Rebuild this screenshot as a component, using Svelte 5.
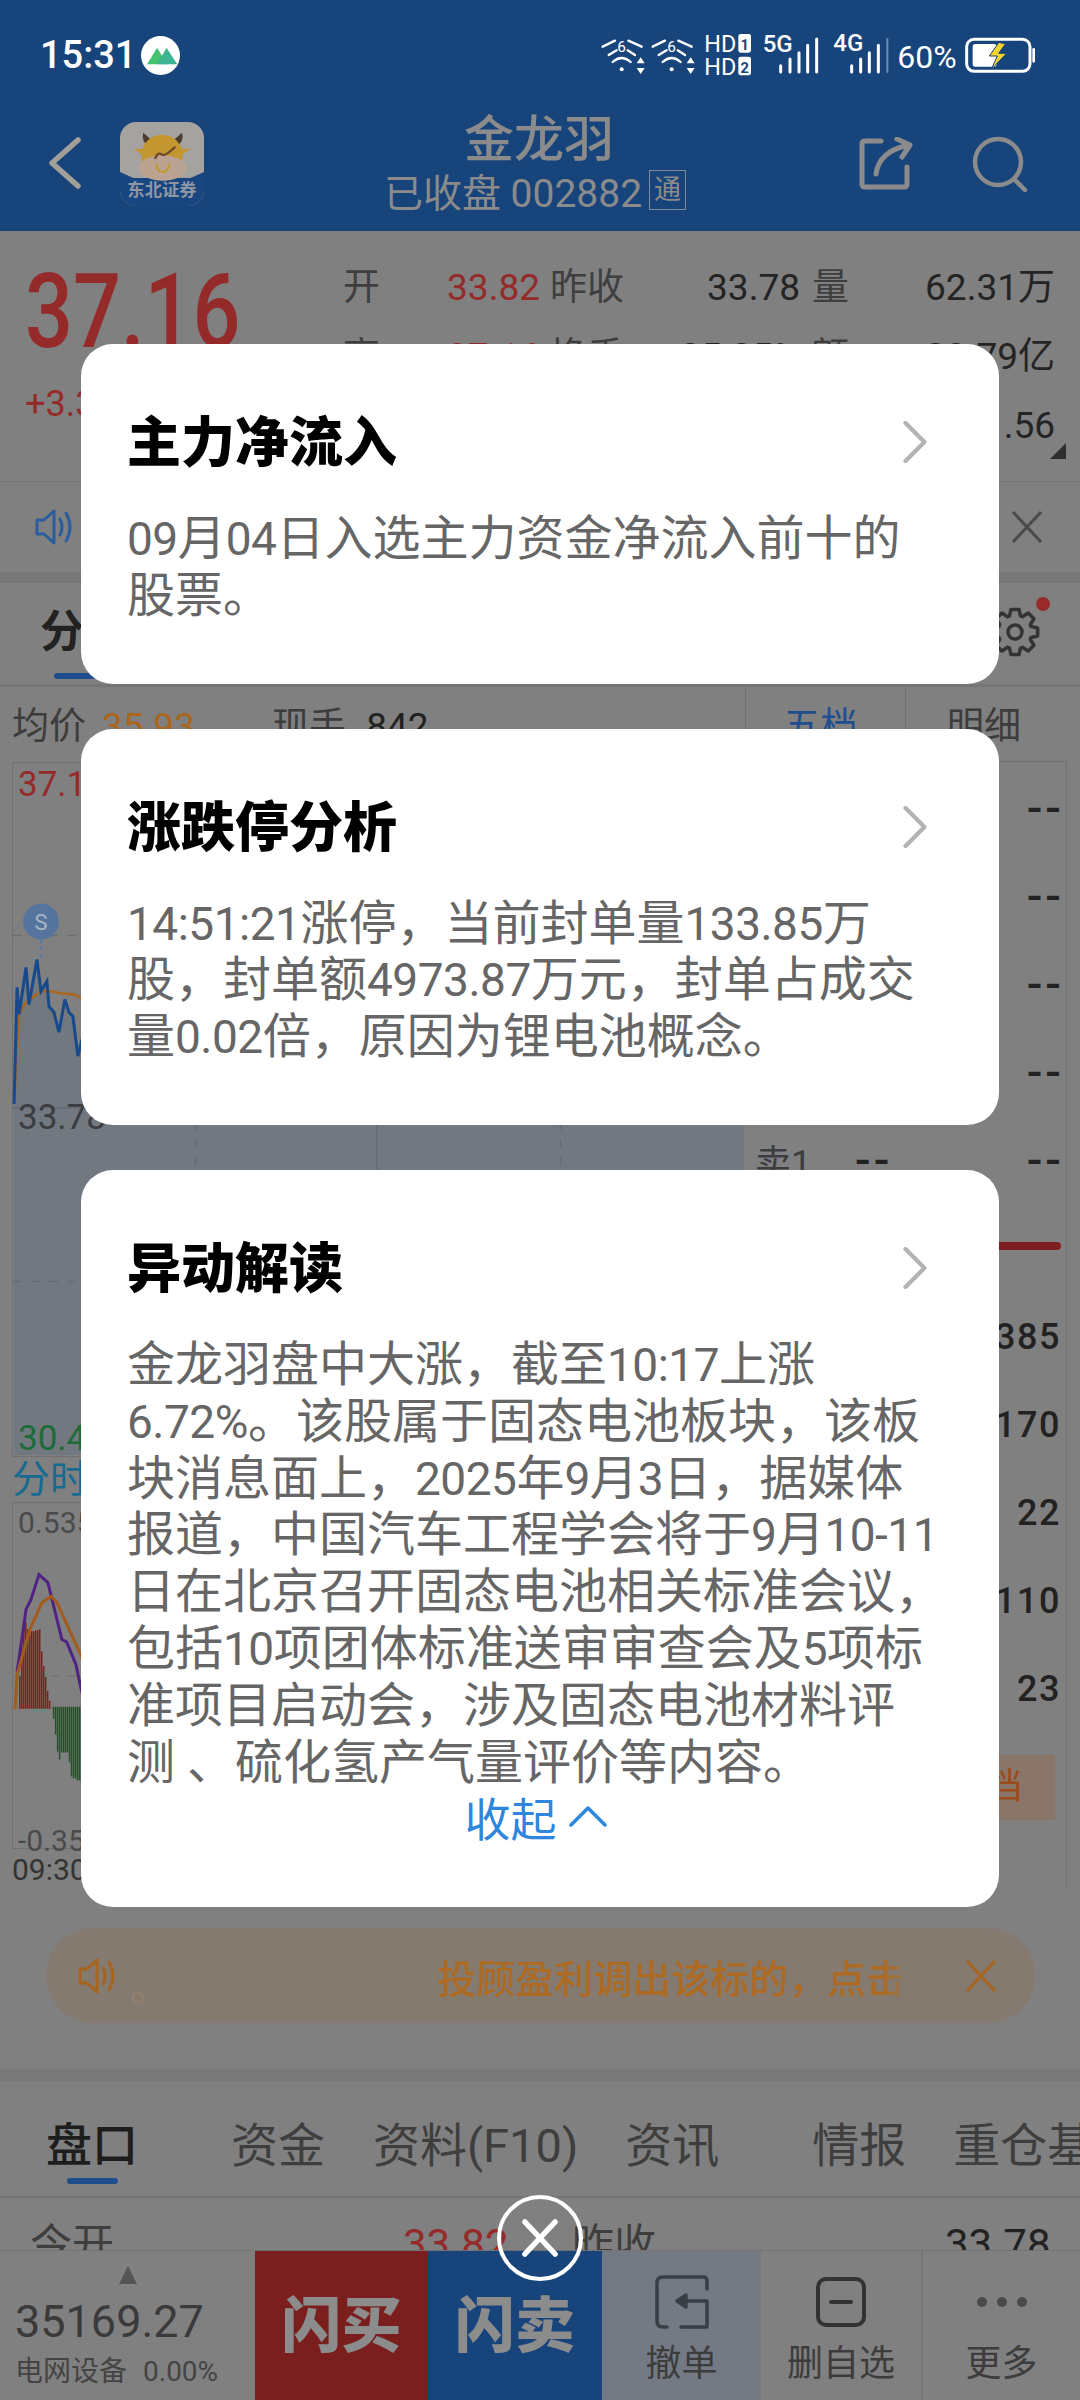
<script>
  const quoteRows = [
    ['开', '33.82', '昨收', '33.78', '量', '62.31万'],
    ['高', '37.16', '换手', '25.25%', '额', '23.79亿'],
    ['低', '33.56', '振幅', '10.54%', '市盈', '41.56']
  ];
  const sellRows = ['卖5', '卖4', '卖3', '卖2', '卖1'];
  const buyRows = [
    ['买1', '37.16', '385'],
    ['买2', '37.15', '170'],
    ['买3', '37.14', '22'],
    ['买4', '37.13', '110'],
    ['买5', '37.12', '23']
  ];
  const infoTabs = [
    { label: '盘口', gap: 46, active: true },
    { label: '资金', gap: 93 },
    { label: '资料(F10)', gap: 48 },
    { label: '资讯', gap: 47 },
    { label: '情报', gap: 93 },
    { label: '重仓基', gap: 47 }
  ];
  const C = '\uFF0C'; // full-width comma
  const cards = [
    {
      title: '主力净流入',
      lines: ['09月04日入选主力资金净流入前十的', '股票。']
    },
    {
      title: '涨跌停分析',
      lines: [
        `14:51:21涨停${C}当前封单量133.85万`,
        `股${C}封单额4973.87万元${C}封单占成交`,
        `量0.02倍${C}原因为锂电池概念。`
      ]
    },
    {
      title: '异动解读',
      lines: [
        `金龙羽盘中大涨${C}截至10:17上涨`,
        `6.72%。该股属于固态电池板块${C}该板`,
        `块消息面上${C}2025年9月3日${C}据媒体`,
        `报道${C}中国汽车工程学会将于9月10-11`,
        `日在北京召开固态电池相关标准会议${C}`,
        '包括10项团体标准送审审查会及5项标',
        `准项目启动会${C}涉及固态电池材料评`,
        '测 、硫化氢产气量评价等内容。'
      ],
      collapsible: true
    }
  ];
  const adviceText = `投顾盈利调出该标的${C}点击查看`;

  // digits run narrower than the CJK text, so they get their own span
  const splitNumbers = (line) => line.split(/([0-9:.%-]+)/);

  // price and average lines, in page pixels (the svg viewBox starts at the chart corner)
  const priceLine = '13,1105 16,988 18,1015 25,968 28,1005 36,960 40,992 46,982 48,1007 53,1013 58,1033 64,1000 68,1013 72,1017 77,1057 82,1037 200,1000 400,1020 745,900';
  const avgLine = '13,1105 18,1015 25,1003 40,992 50,992 60,994 72,995 82,999 400,1000 745,960';
  const macdLine = '15,1673 24,1610 29,1600 37,1575 46,1583 60,1640 65,1643 74,1665 80,1693 85,1700';
  const signalLine = '13,1710 15,1675 28,1630 40,1603 49,1597 55,1603 80,1658 85,1670';

  const redBars = [33, 63, 87, 87, 80, 78, 78, 78, 79, 79, 80, 58, 43, 32, 18, 8];
  const greenBars = [12, 28, 45, 53, 46, 46, 46, 46, 56, 70, 72, 72, 74, 74, 76];

  // gear outline for the chart settings button
  function gearPath(cx, cy, outer, inner, teeth) {
    const pts = [];
    const step = (Math.PI * 2) / teeth;
    for (let i = 0; i < teeth; i++) {
      const a = i * step;
      [[-0.3, inner], [-0.16, outer], [0.16, outer], [0.3, inner]].forEach(([off, r]) => {
        const t = a + off * step * 1.4;
        pts.push(`${(cx + Math.cos(t) * r).toFixed(1)},${(cy + Math.sin(t) * r).toFixed(1)}`);
      });
    }
    return `M${pts.join('L')}Z`;
  }
</script>

{#snippet speaker(color)}
  <svg class="speaker" viewBox="0 0 44 36" fill="none" stroke={color} stroke-width="3" stroke-linejoin="round" stroke-linecap="round">
    <path d="M2 11H9L19 2V34L9 25H2Z" />
    <path d="M25 10Q29 18 25 26" />
    <path d="M31 4Q39 18 31 32" />
  </svg>
{/snippet}

{#snippet cross(color)}
  <svg class="cross" viewBox="0 0 32 32" fill="none" stroke={color} stroke-width="3">
    <path d="M2 1L30 31M30 1L2 31" />
  </svg>
{/snippet}

<div class="page">
  <div class="statusbar">
    <div class="clock">
      <span>15:31</span>
      <svg class="app-dot" viewBox="360 47 116 116">
        <circle cx="418" cy="105" r="58" fill="#fff" />
        <path d="M378 131L408 82L438 131Z" fill="#47c270" />
        <path d="M408 131L436 82L468 131Z" fill="#3db594" />
      </svg>
    </div>
    <svg class="indicators" viewBox="0 0 1380 210" fill="none" stroke="#fff" stroke-linecap="round">
      {#each [0, 150] as dx}
        <g transform="translate({dx} 0)">
          <path d="M38 80L75 62M56 105L80 91M115 62L155 80M113 91L135 105" stroke-width="7" />
          <path d="M68 126Q95 102 122 126" stroke-width="7" />
          <circle cx="95" cy="148" r="6" fill="#fff" stroke="none" />
          <path d="M152 112L164 130H140ZM152 162L140 144H164Z" fill="#fff" stroke="none" />
          <text x="95" y="97" font-size="46" fill="#fff" stroke="none" text-anchor="middle" class="svg-text">6</text>
        </g>
      {/each}
      <g fill="#fff" stroke="none" class="svg-text">
        <text x="343" y="97" font-size="70">HD</text>
        <text x="343" y="165" font-size="70">HD</text>
        <rect x="445" y="42" width="38" height="56" rx="7" />
        <rect x="445" y="110" width="38" height="56" rx="7" />
        <text x="464" y="90" font-size="44" font-weight="700" fill="#18447c" text-anchor="middle">1</text>
        <text x="464" y="158" font-size="44" font-weight="700" fill="#18447c" text-anchor="middle">2</text>
        <text x="518" y="96" font-size="72" font-weight="500">5G</text>
        <text x="730" y="92" font-size="72" font-weight="500">4G</text>
        <text x="922" y="144" font-size="96">60%</text>
      </g>
      <g stroke-width="9">
        <path d="M572 137V156M600 117V156M627 98V156M653 76V156M680 57V156" />
        <path d="M785 137V156M812 117V156M838 98V156M865 76V156" />
        <path d="M892 57V156" stroke="#6f8cb0" stroke-width="6" />
      </g>
      <rect x="1130" y="58" width="190" height="96" rx="22" stroke-width="9" />
      <path d="M1331 88V124" stroke-width="8" />
      <rect x="1148" y="72" width="72" height="68" rx="8" fill="#fff" stroke="none" />
      <path d="M1226 68L1198 108H1222L1204 148L1250 100H1226L1246 72Z" fill="#f6d42a" stroke="#18447c" stroke-width="3" stroke-linejoin="round" />
    </svg>
  </div>

  <header class="topbar">
    <div class="topbar-left">
      <svg class="back" viewBox="0 0 36 56" fill="none" stroke="#a29e98" stroke-width="5.5" stroke-linecap="round" stroke-linejoin="round">
        <path d="M31 4L5 27L31 50" />
      </svg>
      <svg class="broker" viewBox="0 0 252 252">
        <rect width="252" height="252" rx="48" fill="#a5a3a0" />
        <path d="M0 150L40 168H212L252 150V204A48 48 0 0 1 204 252H48A48 48 0 0 1 0 204Z" fill="#174680" />
        <path d="M70 32Q62 60 88 72L92 52ZM186 32Q194 60 168 72L164 52Z" fill="#4a3a30" />
        <path d="M40 80L80 82L85 110ZM212 80L172 82L167 110Z" fill="#c3962f" />
        <circle cx="126" cy="100" r="62" fill="#c3962f" />
        <ellipse cx="128" cy="138" rx="72" ry="38" fill="#bba391" />
        <path d="M108 126Q112 150 128 150Q144 150 148 126" fill="none" stroke="#c3962f" stroke-width="6" />
        <path d="M106 108Q114 88 126 98Q134 104 164 76" fill="none" stroke="#6e4a2e" stroke-width="7" stroke-linecap="round" />
        <text x="126" y="222" font-size="52" font-weight="700" fill="#8e97a3" text-anchor="middle" class="svg-text">东北证券</text>
      </svg>
    </div>
    <div class="topbar-title">
      <div class="stock-name">金龙羽</div>
      <div class="stock-sub">已收盘 002882<span class="tong">通</span></div>
    </div>
    <div class="topbar-right">
      <svg class="share" viewBox="0 0 54 54" fill="none" stroke="#8b8b8b" stroke-width="5" stroke-linecap="round" stroke-linejoin="round">
        <path d="M22 4H6Q3 4 3 7V47Q3 50 6 50H45Q48 50 48 47V30" />
        <path d="M17 37Q20 14 50 8M38 2L51 8L43 20" />
      </svg>
      <svg class="search" viewBox="0 0 56 56" fill="none" stroke="#8b8b8b" stroke-width="4.5" stroke-linecap="round">
        <circle cx="26" cy="26" r="23" />
        <path d="M42 43L53 54" />
      </svg>
    </div>
  </header>

  <section class="quote">
    <div class="quote-main">
      <div class="last-price">37.16</div>
      <div class="change">+3.38 +10.01%</div>
    </div>
    <div class="quote-grid">
      {#each quoteRows as row}
        {#each row as cell, i}
          <div class={i % 2 ? 'q-val' : 'q-label'} class:red={i === 1} class:mid={i === 2} class:end={i === 4}>{cell}</div>
        {/each}
      {/each}
    </div>
    <span class="corner"></span>
  </section>

  <div class="notice">
    {@render speaker('#2a5c9e')}
    {@render cross('#4a4a4a')}
  </div>

  <div class="band"></div>

  <div class="chart-tabs">
    <div class="chart-tab">分时<i></i></div>
    <svg class="gear" viewBox="990 596 62 66">
      <path d={gearPath(1015, 632, 23, 17, 8)} fill="none" stroke="#333" stroke-width="3.5" stroke-linejoin="round" />
      <circle cx="1015" cy="632" r="7" fill="none" stroke="#333" stroke-width="3.5" />
      <circle cx="1043" cy="604" r="7" fill="#982a2a" />
    </svg>
  </div>

  <div class="price-head">
    <div class="price-info">
      <span class="label">均价</span><span class="avg">35.93</span>
      <span class="label hand">现手</span><span class="hand-val">842</span>
    </div>
    <div class="side-tab on">五档</div>
    <div class="side-tab">明细</div>
  </div>

  <div class="body">
    <div class="charts">
      <div class="main-chart">
        <svg viewBox="12 762 733 695">
          <polygon points="13,1457 {priceLine} 745,1457" fill="#72787f" />
          <g stroke="#666c74" stroke-width="1.5" fill="none">
            <path d="M195 762V1457M561 762V1457M12 936H745M12 1283H745" stroke-dasharray="9 9" />
            <path d="M377 762V1457M12 1109H745" />
          </g>
          <polyline points={avgLine} fill="none" stroke="#a9661f" stroke-width="2.5" />
          <polyline points={priceLine} fill="none" stroke="#174a8c" stroke-width="3" />
          <path d="M40 940V962" stroke="#5a7aa3" stroke-width="2" stroke-dasharray="4 3" />
          <circle cx="40" cy="922" r="18" fill="#56759e" />
          <text x="40" y="930" font-size="22" fill="#a9b5c5" text-anchor="middle" class="svg-text">S</text>
        </svg>
        <span class="tick up">37.16</span>
        <span class="tick mid-tick">33.78</span>
        <span class="tick down">30.40</span>
      </div>
      <div class="sub-title">分时量</div>
      <div class="sub-chart">
        <svg viewBox="12 1502 733 347">
          <path d="M12 1677H745" stroke="#747474" stroke-width="1.5" stroke-dasharray="9 9" />
          {#each redBars as h, i}
            <rect x={17 + i * 2} y={1710 - h} width="1.5" height={h} fill="#7a211c" />
          {/each}
          {#each greenBars as h, i}
            <rect x={51 + i * 2} y="1708" width="1.5" height={h} fill="#245028" />
          {/each}
          <polyline points={macdLine} fill="none" stroke="#4f2283" stroke-width="3" />
          <polyline points={signalLine} fill="none" stroke="#a35b1d" stroke-width="3" />
        </svg>
        <span class="tick small top">0.535</span>
        <span class="tick small bottom">-0.355</span>
      </div>
      <div class="axis">09:30</div>
    </div>

    <aside class="book">
      {#each sellRows as label}
        <div class="book-row"><span>{label}</span><b class="dash">--</b><b class="dash">--</b></div>
      {/each}
      <div class="book-split"></div>
      {#each buyRows as [label, price, size]}
        <div class="book-row"><span>{label}</span><b class="red">{price}</b><b>{size}</b></div>
      {/each}
      <div class="book-more">十档</div>
    </aside>
  </div>

  <div class="advice">
    {@render speaker('#a5651f')}
    <span class="advice-dot">。</span>
    <span class="advice-text">{adviceText}</span>
    {@render cross('#a5651f')}
  </div>

  <div class="band low"></div>

  <nav class="info-tabs">
    {#each infoTabs as tab}
      <span class="info-tab" class:active={tab.active} style="margin-left: {tab.gap}px">{tab.label}</span>
    {/each}
  </nav>

  <div class="open-row">
    <span>今开</span><span class="red">33.82</span><span>昨收</span><span class="dark">33.78</span>
  </div>

  <footer class="toolbar">
    <div class="index">
      <svg class="index-arrow" viewBox="0 0 20 20"><path d="M10 1L19 19H1Z" fill="#555" /></svg>
      <div class="index-val">35169.27</div>
      <div class="index-sub"><span>电网设备</span><span>0.00%</span></div>
    </div>
    <div class="flash buy">闪买</div>
    <div class="flash sell">闪卖</div>
    <div class="tool undo">
      <svg viewBox="0 0 54 54" fill="none" stroke="#3a3f46" stroke-width="3.5" stroke-linecap="round" stroke-linejoin="round">
        <path d="M52 14V6Q52 2 48 2H8Q2 2 2 8V46Q2 52 8 52H12" />
        <path d="M26 52H52V26H28" />
        <path d="M31 20L22 26L31 32Z" fill="#3a3f46" />
      </svg>
      <span>撤单</span>
    </div>
    <div class="tool">
      <svg viewBox="0 0 54 54" fill="none" stroke="#333" stroke-width="4" stroke-linecap="round">
        <rect x="4" y="4" width="46" height="46" rx="8" />
        <path d="M17 27H37" />
      </svg>
      <span>删自选</span>
    </div>
    <div class="tool more">
      <svg viewBox="0 0 54 54" fill="#4a4a4a">
        <circle cx="7" cy="27" r="5" /><circle cx="27" cy="27" r="5" /><circle cx="47" cy="27" r="5" />
      </svg>
      <span>更多</span>
    </div>
  </footer>

  <div class="modal-stack">
    {#each cards as card}
      <article class="card">
        <div class="card-head">
          <h2>{card.title}</h2>
          <svg class="chevron" viewBox="0 0 24 40" fill="none" stroke="#b3b3b3" stroke-width="4" stroke-linecap="round" stroke-linejoin="round">
            <path d="M3 2L21 20L3 38" />
          </svg>
        </div>
        <div class="card-text">
          {#each card.lines as line}
            <div>
              {#each splitNumbers(line) as part, i}{#if i % 2}<span class="num">{part}</span>{:else}{part}{/if}{/each}
            </div>
          {/each}
        </div>
        {#if card.collapsible}
          <div class="collapse">
            收起
            <svg viewBox="0 0 40 22" fill="none" stroke="#2f86de" stroke-width="3.5" stroke-linecap="round" stroke-linejoin="round">
              <path d="M3 20L20 3L37 20" />
            </svg>
          </div>
        {/if}
      </article>
    {/each}
  </div>

  <button class="close" aria-label="关闭">
    <svg viewBox="0 0 40 40" fill="none" stroke="#fff" stroke-width="5.5" stroke-linecap="round">
      <path d="M4 3L36 37M36 3L4 37" />
    </svg>
  </button>
</div>

<style>
  :global(body) {
    margin: 0;
    background: #808080;
    font-family: Roboto, "Noto Sans CJK SC", sans-serif;
  }

  .page {
    position: relative;
    width: 1080px;
    height: 2400px;
    overflow: hidden;
    display: flex;
    flex-direction: column;
    background: #808080;
    color: #2a2a2a;
  }

  .svg-text {
    font-family: Roboto, "Noto Sans CJK SC", sans-serif;
  }

  .red {
    color: #952a2a;
  }

  /* status + title */
  .statusbar {
    height: 90px;
    padding: 20px 30px 0 40px;
    box-sizing: border-box;
    display: flex;
    justify-content: space-between;
    align-items: flex-start;
    background: #18447c;
  }

  .clock {
    height: 70px;
    display: flex;
    align-items: center;
    gap: 5px;
    color: #fff;
    font-size: 38px;
    font-weight: 500;
  }

  .app-dot {
    width: 39px;
    height: 39px;
  }

  .indicators {
    width: 460px;
    height: 70px;
  }

  .topbar {
    height: 141px;
    padding-top: 6px;
    box-sizing: border-box;
    display: grid;
    grid-template-columns: 1fr auto 1fr;
    align-items: center;
    background: #18447c;
  }

  .topbar-left {
    display: flex;
    align-items: center;
    padding-left: 47px;
    gap: 37px;
  }

  .back {
    width: 36px;
    height: 56px;
  }

  .broker {
    width: 84px;
    height: 84px;
  }

  .topbar-title {
    text-align: center;
    color: #8b8b8b;
    padding-right: 2px;
  }

  .stock-name {
    font-size: 50px;
    font-weight: 500;
    line-height: 56px;
  }

  .stock-sub {
    font-size: 39px;
    line-height: 44px;
    margin: 4px 0 0 -8px;
    display: flex;
    align-items: center;
  }

  .tong {
    width: 35px;
    height: 38px;
    margin-left: 7px;
    margin-top: -8px;
    border: 1px solid #7f8b9a;
    font-size: 27px;
    line-height: 38px;
    text-align: center;
  }

  .topbar-right {
    display: flex;
    justify-content: flex-end;
    align-items: center;
    padding-right: 52px;
    gap: 59px;
  }

  .share {
    width: 54px;
    height: 54px;
    margin-left: 2px;
  }

  .search {
    width: 56px;
    height: 56px;
  }

  /* quote summary */
  .quote {
    position: relative;
    height: 250px;
    display: flex;
    border-bottom: 1px solid #777;
    box-sizing: content-box;
  }

  .quote-main {
    width: 343px;
    padding: 31px 0 0 25px;
    box-sizing: border-box;
  }

  .last-price {
    color: #952a2a;
    font-size: 103px;
    font-weight: 500;
    line-height: 100px;
    transform: scaleX(0.82);
    transform-origin: left;
  }

  .change {
    color: #952a2a;
    font-size: 36px;
    line-height: 44px;
    margin-top: 20px;
  }

  .quote-grid {
    display: grid;
    grid-template-columns: 40px 157px 88px 172px 50px 205px;
    grid-auto-rows: 69px;
    padding-top: 22px;
    font-size: 37px;
    line-height: 69px;
    white-space: nowrap;
  }

  .q-label {
    color: #3e3e3e;
  }

  .q-label.mid {
    padding-left: 10px;
  }

  .q-label.end {
    padding-left: 12px;
  }

  .q-val {
    text-align: right;
    color: #242424;
  }

  .q-val.red {
    color: #952a2a;
  }

  .corner {
    position: absolute;
    right: 14px;
    bottom: 22px;
    width: 0;
    height: 0;
    border-left: 16px solid transparent;
    border-bottom: 16px solid #2e2e2e;
  }

  .notice {
    height: 90px;
    display: flex;
    justify-content: space-between;
    align-items: center;
    padding: 0 37px 0 35px;
  }

  .speaker {
    width: 44px;
    height: 36px;
  }

  .cross {
    width: 32px;
    height: 32px;
  }

  .band {
    height: 11px;
    background: #777;
    flex: none;
  }

  .band.low {
    height: 12px;
    margin-top: 46px;
    background: #787878;
  }

  .chart-tabs {
    height: 104px;
    display: flex;
    justify-content: space-between;
    align-items: flex-start;
    border-bottom: 3px solid #757575;
    box-sizing: border-box;
    padding-left: 40px;
  }

  .chart-tab {
    position: relative;
    margin-top: 24px;
    font-size: 44px;
    font-weight: 700;
    line-height: 50px;
    color: #222;
  }

  .chart-tab i {
    position: absolute;
    left: 14px;
    top: 66px;
    width: 60px;
    height: 6px;
    border-radius: 3px;
    background: #1e4e8e;
  }

  .gear {
    width: 62px;
    height: 66px;
    margin-top: 13px;
    margin-right: 28px;
  }

  .price-head {
    height: 75px;
    display: flex;
    align-items: stretch;
    font-size: 37px;
    line-height: 80px;
  }

  .price-info {
    width: 745px;
    padding-left: 12px;
    box-sizing: border-box;
    white-space: nowrap;
  }

  .label {
    color: #3c3c3c;
  }

  .avg {
    color: #a9661f;
    margin-left: 16px;
  }

  .hand {
    margin-left: 68px;
  }

  .hand-val {
    margin-left: 20px;
    color: #222;
  }

  .side-tab {
    width: 163px;
    text-align: center;
    color: #3c3c3c;
    border-left: 1px solid #707070;
    border-bottom: 1px solid #707070;
    box-sizing: border-box;
    padding-right: 6px;
  }

  .side-tab.on {
    width: 160px;
    color: #1e4e8e;
    border-bottom: none;
    padding-right: 10px;
  }

  .body {
    display: flex;
    height: 1128px;
  }

  .charts {
    width: 745px;
    padding-left: 12px;
    box-sizing: border-box;
    flex: none;
  }

  .main-chart,
  .sub-chart {
    position: relative;
    width: 733px;
    box-sizing: border-box;
  }

  .main-chart {
    height: 695px;
    border-left: 1px solid #707070;
    border-top: 1px solid #707070;
    border-bottom: 1px solid #707070;
  }

  .main-chart svg,
  .sub-chart svg {
    position: absolute;
    left: -1px;
    top: -1px;
    width: 733px;
    height: 100%;
  }

  .tick {
    position: absolute;
    left: 5px;
    font-size: 35px;
    line-height: 40px;
    color: #3a3d42;
  }

  .tick.up {
    top: 2px;
    color: #952a2a;
  }

  .tick.mid-tick {
    top: 335px;
  }

  .tick.down {
    top: 656px;
    color: #1c6b38;
  }

  .tick.small {
    font-size: 30px;
    line-height: 36px;
    color: #4a4a4a;
  }

  .tick.top {
    top: 2px;
  }

  .tick.bottom {
    top: 320px;
  }

  .sub-title {
    height: 45px;
    font-size: 38px;
    line-height: 44px;
    color: #176a90;
    white-space: nowrap;
  }

  .sub-chart {
    height: 347px;
    border: 1px solid #707070;
    border-right: none;
  }

  .axis {
    font-size: 30px;
    line-height: 42px;
    color: #333;
  }

  .book {
    width: 322px;
    flex: none;
    padding: 2px 5px 0 10px;
    box-sizing: border-box;
    border-right: 1px solid #707070;
    height: 1128px;
  }

  .book-row {
    height: 88px;
    display: grid;
    grid-template-columns: 100px 1fr auto;
    align-items: center;
    font-size: 36px;
    color: #3a3d42;
  }

  .book-row b {
    font-weight: 500;
    color: #222;
    letter-spacing: 1.5px;
  }

  .book-row b.dash {
    font-size: 46px;
    line-height: 46px;
    letter-spacing: 3px;
    margin-right: -3px;
  }

  .book-row b.red {
    color: #952a2a;
  }

  .book-split {
    height: 8px;
    border-radius: 4px;
    background: #7c1f1e;
    margin: 38px 0 43px;
  }

  .book-more {
    height: 65px;
    margin-top: 22px;
    width: 146px;
    margin-left: auto;
    margin-right: 6px;
    padding-left: 8px;
    box-sizing: border-box;
    background: #8a7668;
    color: #9c4a1a;
    text-align: center;
    font-size: 36px;
    line-height: 65px;
  }

  /* orange tip pill */
  .advice {
    height: 95px;
    margin: 38px 45px 0 46px;
    padding: 0 36px 0 32px;
    display: flex;
    align-items: center;
    border-radius: 48px;
    background: #857a70;
    color: #ad6a22;
    font-size: 39px;
    font-weight: 500;
    white-space: nowrap;
  }

  .advice-dot {
    margin: 14px 0 0 8px;
    color: #91806e;
    width: 307px;
  }

  .advice-text {
    width: 475px;
    overflow: hidden;
    margin-right: 53px;
    -webkit-mask-image: linear-gradient(90deg, #000 94%, transparent);
    mask-image: linear-gradient(90deg, #000 94%, transparent);
  }

  .info-tabs {
    height: 117px;
    display: flex;
    align-items: center;
    padding-top: 5px;
    box-sizing: border-box;
    border-bottom: 2px solid #747474;
    font-size: 47px;
    color: #3e3e3e;
    white-space: nowrap;
    flex: none;
  }

  .info-tab {
    position: relative;
    flex: none;
  }

  .info-tab.active {
    color: #1e1e1e;
    font-size: 46px;
    font-weight: 500;
  }

  .info-tab.active::after {
    content: '';
    position: absolute;
    left: 21px;
    top: 70px;
    width: 51px;
    height: 6px;
    border-radius: 3px;
    background: #1e4e8e;
  }

  .open-row {
    height: 52px;
    overflow: hidden;
    display: grid;
    grid-template-columns: 373px 169px 373px auto;
    padding: 25px 0 0 30px;
    box-sizing: border-box;
    font-size: 42px;
    line-height: 44px;
    color: #3e3e3e;
    flex: none;
  }

  .open-row .dark {
    color: #222;
  }

  .toolbar {
    position: relative;
    height: 150px;
    display: flex;
    border-top: 1px solid #727272;
    background: #808080;
    box-sizing: border-box;
    flex: none;
  }

  .index {
    width: 255px;
    padding-left: 15px;
    box-sizing: border-box;
    flex: none;
  }

  .index-arrow {
    display: block;
    width: 20px;
    height: 20px;
    margin: 14px 0 0 103px;
  }

  .index-val {
    font-size: 45px;
    line-height: 50px;
    margin-top: 12px;
    color: #3a3a3a;
  }

  .index-sub {
    display: flex;
    gap: 16px;
    font-size: 28px;
    line-height: 34px;
    margin-top: 8px;
    color: #444;
  }

  .flash {
    flex: none;
    width: 173px;
    text-align: center;
    font-size: 60px;
    font-weight: 900;
    line-height: 152px;
    color: #8c8c8c;
  }

  .flash.buy {
    background: #7a1f1e;
  }

  .flash.sell {
    width: 174px;
    background: #18447c;
  }

  .tool {
    position: relative;
    width: 160px;
    flex: none;
    padding-top: 24px;
    box-sizing: border-box;
    display: flex;
    flex-direction: column;
    align-items: center;
    font-size: 36px;
    color: #3c3c3c;
  }

  .tool svg {
    width: 54px;
    height: 54px;
  }

  .tool span {
    margin-top: 13px;
    line-height: 44px;
  }

  .tool.undo {
    width: 159px;
    background: #737a83;
  }

  .tool.more {
    width: 159px;
    border-left: 2px solid #777;
    background-clip: padding-box;
  }

  /* popup cards */
  .modal-stack {
    position: absolute;
    left: 81px;
    top: 344px;
    width: 918px;
    display: flex;
    flex-direction: column;
    gap: 45px;
  }

  .card {
    background: #fff;
    border-radius: 32px;
    padding: 68px 46px 59px;
    box-sizing: border-box;
  }

  .card-head {
    display: flex;
    justify-content: space-between;
    align-items: center;
    height: 60px;
    margin-bottom: 39px;
  }

  h2 {
    margin: 4px 0 0;
    font-size: 54px;
    font-weight: 900;
    line-height: 60px;
    color: #000;
  }

  .chevron {
    width: 26px;
    height: 42px;
    margin-right: 25px;
  }

  .card-text {
    font-size: 48px;
    line-height: 56.8px;
    color: #666;
    white-space: nowrap;
  }

  .card-text div {
    height: 56.8px;
  }

  .num {
    font-size: 46px;
    letter-spacing: -0.5px;
  }

  .collapse {
    display: flex;
    justify-content: center;
    align-items: center;
    gap: 11px;
    height: 50px;
    margin-bottom: 7px;
    padding-right: 8px;
    font-size: 46px;
    color: #2f86de;
  }

  .collapse svg {
    width: 40px;
    height: 22px;
  }

  .close {
    position: absolute;
    left: 497px;
    top: 2195px;
    width: 86px;
    height: 86px;
    padding: 0;
    border: 4px solid #fff;
    border-radius: 50%;
    background: transparent;
    display: flex;
    align-items: center;
    justify-content: center;
  }

  .close svg {
    width: 38px;
    height: 38px;
  }
</style>
